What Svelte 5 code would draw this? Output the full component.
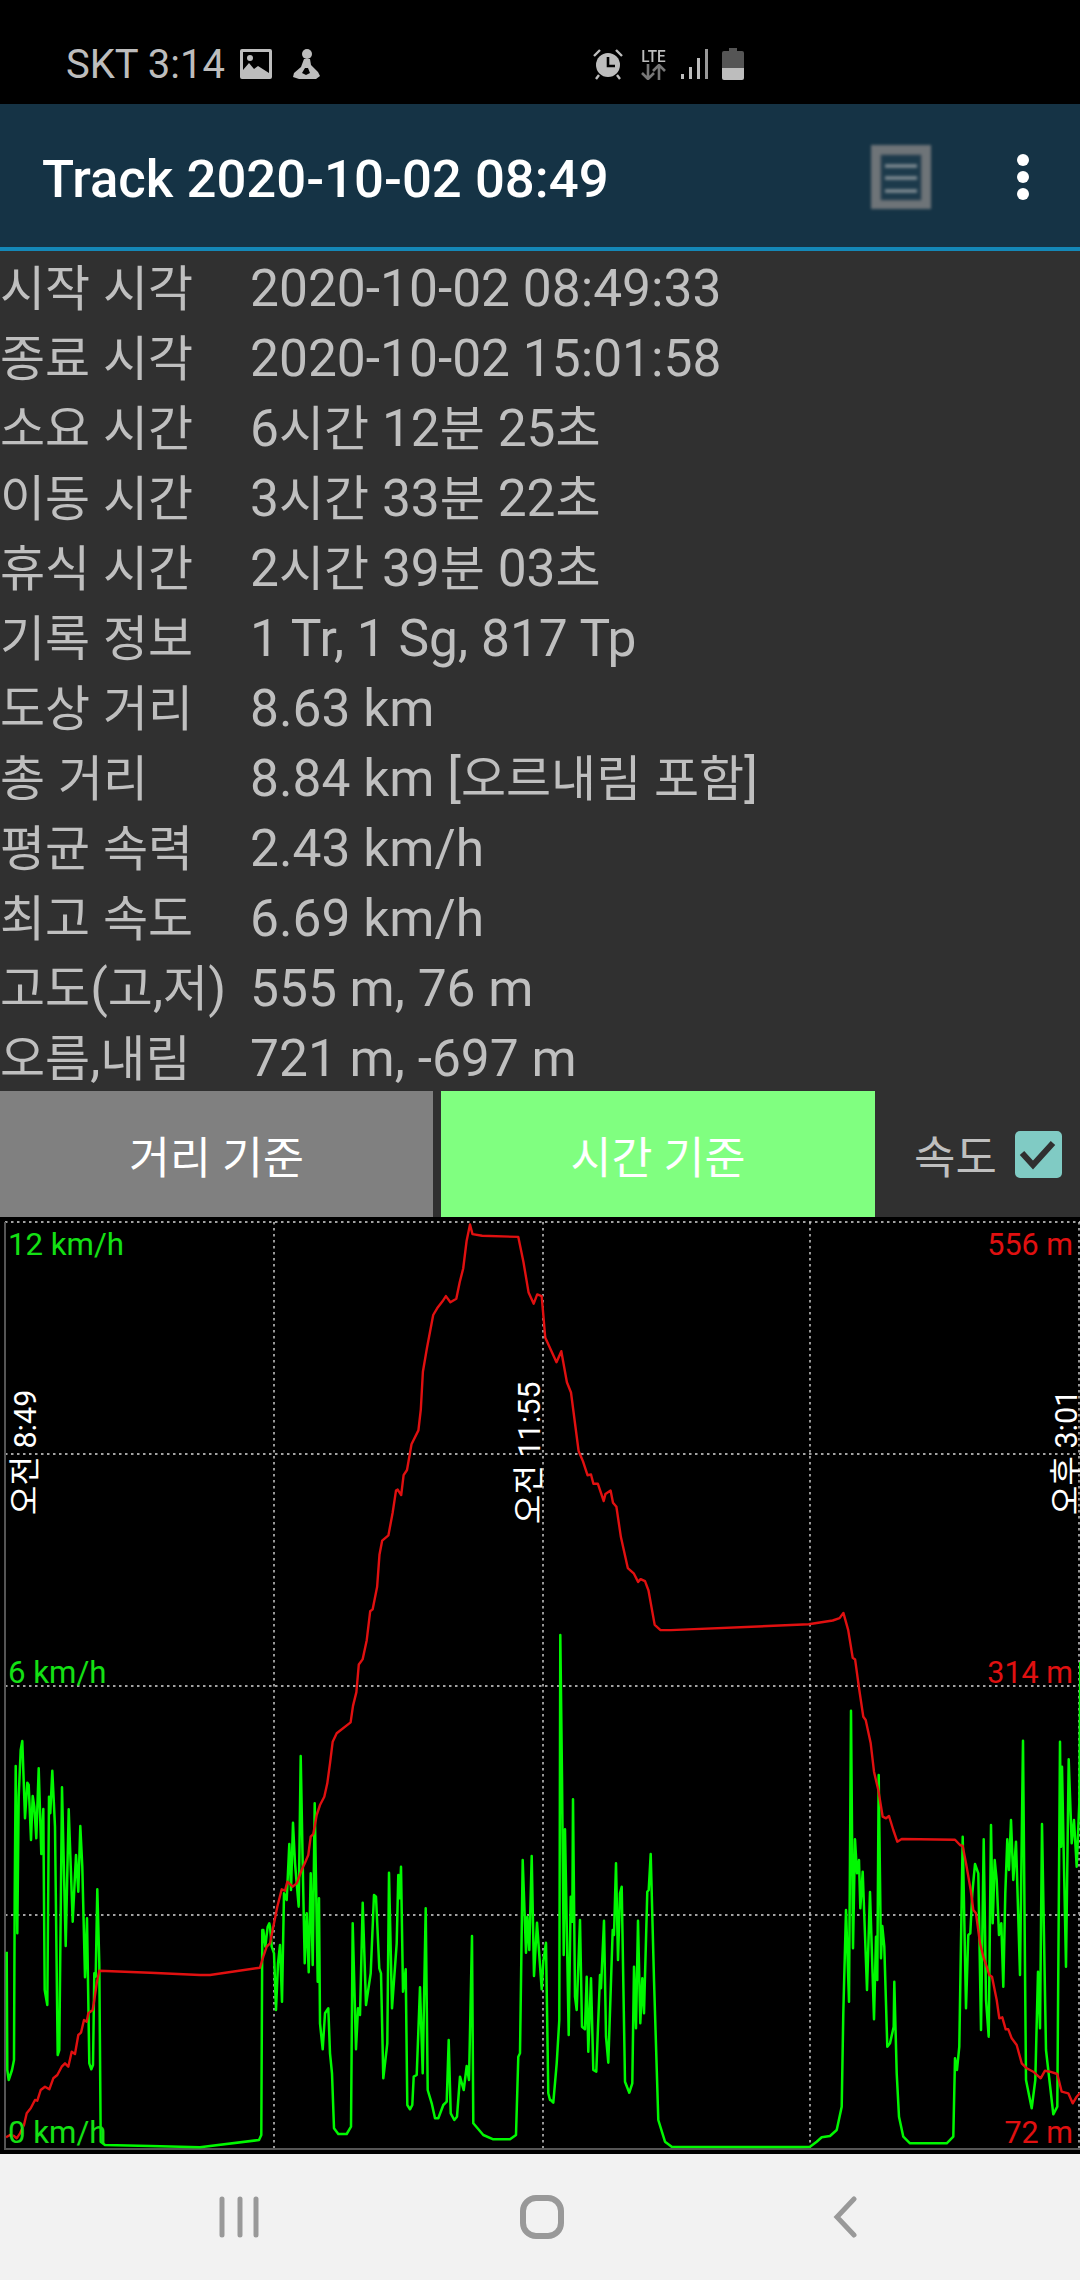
<script>
  const rows = [
    ['시작 시각', '2020-10-02 08:49:33'],
    ['종료 시각', '2020-10-02 15:01:58'],
    ['소요 시간', '6시간 12분 25초'],
    ['이동 시간', '3시간 33분 22초'],
    ['휴식 시간', '2시간 39분 03초'],
    ['기록 정보', '1 Tr, 1 Sg, 817 Tp'],
    ['도상 거리', '8.63 km'],
    ['총 거리', '8.84 km [오르내림 포함]'],
    ['평균 속력', '2.43 km/h'],
    ['최고 속도', '6.69 km/h'],
    ['고도(고,저)', '555 m, 76 m'],
    ['오름,내림', '721 m, -697 m']
  ];
  const split = (t) => t.split(/([\uAC00-\uD7A3]+)/).filter(Boolean).map((s) => ({ s, ko: /[\uAC00-\uD7A3]/.test(s) }));

  const map = (ox, oy, sc, pts) =>
    pts.trim().split(/\s+/).map((p) => {
      const [x, y] = p.split(',').map(Number);
      return `${(ox + x / sc).toFixed(1)},${(oy + y / sc).toFixed(1)}`;
    }).join(' ');

  const green = [
    map(0, 1730, 3, '20,665 22,1020 26,1050 36,1020 42,990 44,500 47,108 50,400 52,610 56,200 62,60 67,33 70,120 75,265 82,158 86,165 93,330 98,198 103,230 109,325 116,115 124,372 130,237 134,780 142,825 147,200 151,250 157,122 165,290 173,975 178,960 186,172 197,648 206,238 218,575 228,375 235,485 241,288 247,410 255,742 261,565 268,1000 274,1018 279,1005 283,730 287,740 292,478 298,700 302,1235 315,1245 450,1248 600,1252 777,1230 784,1215 787,600 790,600 796,650 803,590 808,580'),
    map(270, 1730, 3, '0,590 5,650 12,670 18,840 24,700 30,645 36,815 42,490 50,510 58,342 63,480 69,278 75,400 86,530 92,78 98,400 104,700 110,550 116,727 122,430 128,705 134,220 143,755 147,505 150,880 158,958 165,850 175,835 180,970 186,1030 192,1195 205,1212 230,1212 243,1190 248,580 258,958 264,835 270,855 278,518 288,825 302,730 312,495 318,500 328,715 333,730 340,1045 352,940 357,428 366,835 380,640 385,435 389,505 393,410 399,785 407,718 412,1125 420,1138 427,1125 431,1040 440,1035 450,772 458,1030 467,535 473,1080 485,1120 495,1165 505,1165 520,1125 530,1115 536,930 542,1150 553,1170 561,1160 570,1040 581,1080 590,1008 597,1050 606,618 610,1180 640,1215 670,1228 720,1228 738,1215 745,980 750,970 758,390 768,668 772,560 778,660 785,378 792,738 801,578 815,778 820,695 828,638 835,1090 840,1110'),
    map(530, 1630, 3, '60,1408 70,1418 80,1300 88,1170 91,15 96,440 101,975 105,598 116,1215 122,800 127,875 129,508 135,1100 140,1140 150,870 156,1190 165,1198 170,1040 175,1265 183,1045 190,1320 199,1325 210,1035 213,1075 222,872 228,1220 235,1298 248,900 252,915 258,700 264,990 270,790 275,770 285,1355 298,1388 307,1360 312,1010 318,1195 324,872 331,1180 337,1045 342,1150 352,785 356,780 362,672 372,1050 385,1470 405,1535 425,1550 810,1551'),
    map(800, 1680, 3, '30,1400 50,1385 65,1372 90,1368 110,1350 125,1280 130,1000 138,690 147,965 153,92 159,805 165,478 171,580 177,540 181,685 188,575 201,930 210,636 222,1018 228,770 232,900 236,285 243,835 247,738 253,800 262,1100 270,1090 281,1040 283,905 290,1180 297,1310 310,1370 330,1390 440,1390 460,1370 465,1135 471,1170 478,1100 488,470 498,985 505,765 511,760 517,640 525,552 535,580 543,1050 551,478 558,960 566,1070 573,435 578,730 584,540 590,600 597,765 604,730 610,920 616,640 622,478 627,570 633,420 640,600 648,485 660,885 669,182 678,1200 695,1285 706,1200 714,875 720,1045 726,432 738,1110 760,1303 772,1280 780,185 783,500 786,260 798,860 806,238 815,490 822,420 830,560 838,370 841,-54')
  ].join(' ');

  const red = [
    map(0, 1730, 3, '18,1222 30,1215 42,1218 50,1225 60,1210 72,1185 80,1150 92,1135 105,1110 112,1112 122,1080 135,1070 148,1078 160,1045 172,1035 185,1010 195,1000 205,1010 215,965 225,972 235,915 243,908 252,870 260,875 265,850 278,840 283,810 290,760 298,722 450,728 600,735 630,735 780,713 790,680 800,650'),
    map(270, 1730, 3, '0,640 10,590 22,530 35,478 45,482 52,455 68,470 80,460 95,420 105,398 115,375 122,320 130,312 140,255 150,225 163,200 172,160 180,100 188,35 200,10'),
    map(0, 1210, 2.904, '1018,1488 1025,1440 1035,1400 1042,1320 1053,1305 1065,1250 1075,1165 1082,1160 1095,1095 1102,1000 1110,960 1128,945 1140,880 1150,815 1155,812 1165,828 1172,770 1182,755 1195,680 1215,640 1222,580 1228,470 1240,400 1258,305 1270,285 1285,265 1295,250 1308,268 1325,258 1335,210 1345,170 1355,90 1365,42 1372,70 1400,75 1505,78 1520,150 1535,240 1550,272 1560,245'),
    map(540, 1210, 2.904, '5,250 15,370 48,442 62,410 78,500 90,530 112,700 125,730 138,770 148,768 155,795 168,795 185,845 190,825 205,815 212,850 222,862 235,950 255,1040 272,1055 285,1080 292,1072 305,1078 315,1105 333,1205 350,1220 380,1220 780,1203 850,1192 870,1185 881,1170 895,1220 908,1300 915,1305'),
    map(800, 1680, 3, '178,30 190,110 197,120 212,190 222,275 235,330 248,410 258,415 267,408 280,450 292,485 305,477 465,479 480,495 488,498 498,550 512,630 520,690 528,700 540,790 550,830 560,860 568,885 576,890 590,960 598,1015 607,1012 617,1048 625,1048 635,1075 650,1095 665,1150 680,1165 700,1175 722,1195 735,1172 750,1175 772,1182 785,1235 805,1240 818,1270 830,1250 841,1238')
  ].join(' ');

  const hGrid = [1222, 1454, 1686, 1915];
  const vGrid = [274, 543, 810, 1079];
  const left = [['12 km/h', 1255], ['6 km/h', 1683], ['0 km/h', 2143]];
  const right = [['556 m', 1255], ['314 m', 1683], ['72 m', 2143]];
  const vert = [['오전', '8:49', 36, 1515], ['오전', '11:55', 540, 1524], ['오후', '3:01', 1077, 1515]];
</script>

<div class="page">
  <div class="status">
    <span class="carrier">SKT 3:14</span>
    <svg class="ic-image" viewBox="0 0 32 30" width="32" height="30">
      <path fill="#bdbdbd" fill-rule="evenodd" d="M2 0h28a2 2 0 0 1 2 2v26a2 2 0 0 1-2 2H2a2 2 0 0 1-2-2V2a2 2 0 0 1 2-2zM3 3v18l6-7 5 6 4-3 11 7V3z"/>
      <circle cx="10" cy="9" r="3" fill="#bdbdbd"/>
    </svg>
    <svg class="ic-fig" viewBox="0 0 28 30" width="28" height="30">
      <circle cx="15" cy="5" r="5" fill="#bdbdbd"/>
      <path fill="#bdbdbd" fill-rule="evenodd" d="M12 10h6l1 6 7 7 2 4-4 3H7l-6-2 1-4 7-6zM13 19l-3 5 4 2 4-2-2-5z"/>
    </svg>
    <svg class="ic-alarm" viewBox="0 0 32 32" width="32" height="32">
      <path stroke="#bdbdbd" stroke-width="2.4" fill="none" d="M2 8 8 2M30 8 24 2M7 27 4 31M25 27l3 4"/>
      <circle cx="16" cy="17" r="12" fill="#bdbdbd"/>
      <path stroke="#000" stroke-width="2.6" fill="none" d="M16 9v9h7"/>
    </svg>
    <span class="net">
      <span class="lte">LTE</span>
      <svg viewBox="0 0 32 16" width="32" height="16">
        <path stroke="#777" stroke-width="2.6" fill="none" d="M10 0v14M4 9l6 6 6-6M21 16V2M15 7l6-6 6 6"/>
      </svg>
    </span>
    <svg class="ic-signal" viewBox="0 0 27 30" width="27" height="30">
      <path fill="#bdbdbd" d="M0 25h3v5H0zM8 18h3v12H8zM16 9h3v21h-3z"/>
      <path fill="#999" d="M24 0h3v30h-3z"/>
    </svg>
    <svg class="ic-batt" viewBox="0 0 22 32" width="22" height="32">
      <path fill="#555" d="M7 0h8v3h5a2 2 0 0 1 2 2v15H0V5a2 2 0 0 1 2-2h5z"/>
      <path fill="#bdbdbd" d="M0 20h22v10a2 2 0 0 1-2 2H2a2 2 0 0 1-2-2z"/>
    </svg>
  </div>

  <header class="bar">
    <h1>Track 2020-10-02 08:49</h1>
    <svg class="ic-list" viewBox="0 0 60 64" width="60" height="64">
      <rect x="0" y="0" width="60" height="64" fill="#6e7478"/>
      <rect x="10" y="10" width="40" height="45" fill="#1c3a4b" stroke="#3c4c58" stroke-width="1"/>
      <path stroke="#7f8b92" stroke-width="3.5" d="M14 21h32M14 33h32M14 46h32"/>
    </svg>
    <svg class="ic-more" viewBox="0 0 14 46" width="14" height="46">
      <circle cx="7" cy="6" r="6" fill="#fff"/>
      <circle cx="7" cy="23" r="6" fill="#fff"/>
      <circle cx="7" cy="40" r="6" fill="#fff"/>
    </svg>
  </header>

  <section class="info">
    {#each rows as [label, value]}
      <div class="row">
        <span class="lab">{#each split(label) as p}{#if p.ko}<span class="ko">{p.s}</span>{:else}{p.s}{/if}{/each}</span>
        <span>{#each split(value) as p}{#if p.ko}<span class="ko">{p.s}</span>{:else}{p.s}{/if}{/each}</span>
      </div>
    {/each}
  </section>

  <div class="tabs">
    <button class="tab off">거리 기준</button>
    <button class="tab on">시간 기준</button>
    <span class="speed">속도</span>
    <span class="check">
      <svg viewBox="0 0 47 47" width="47" height="47">
        <path d="M7 22l11 12L38 12" fill="none" stroke="#303030" stroke-width="6"/>
      </svg>
    </span>
  </div>

  <div class="chart">
    <svg viewBox="0 1217 1080 937" width="1080" height="937">
      <g class="grid">
        {#each hGrid as y}<line x1="5" y1={y} x2="1080" y2={y} />{/each}
        {#each vGrid as x}<line x1={x} y1="1222" x2={x} y2="2149" />{/each}
      </g>
      <path class="axis" d="M5 1222V2149H1080" />
      <polyline class="green" points={green} />
      <polyline class="red" points={red} />
      {#each left as [t, y]}<text class="lg" x="8" y={y}>{t}</text>{/each}
      {#each right as [t, y]}<text class="lr" x="1073" y={y}>{t}</text>{/each}
      {#each vert as [a, b, x, y]}
        <text class="lv" transform="rotate(-90 {x} {y})" x={x} y={y}><tspan class="lvk">{a}</tspan> {b}</text>
      {/each}
    </svg>
  </div>

  <nav class="nav">
    <svg viewBox="0 0 42 42" width="42" height="42">
      <path stroke="#999" stroke-width="5" stroke-linecap="round" d="M3 3v36M21 3v36M37 3v36"/>
    </svg>
    <svg viewBox="0 0 44 44" width="44" height="44">
      <rect x="3" y="3" width="38" height="38" rx="13" fill="none" stroke="#999" stroke-width="6"/>
    </svg>
    <svg class="back" viewBox="0 0 24 42" width="24" height="42">
      <path d="M21 3 4 21l17 18" fill="none" stroke="#999" stroke-width="5" stroke-linecap="round"/>
    </svg>
  </nav>
</div>

<style>
  :global(body) { margin: 0; background: #000; }
  .page {
    width: 1080px;
    height: 2280px;
    overflow: hidden;
    font-family: Roboto, "Noto Sans CJK KR", sans-serif;
    background: #303030;
  }
  .status {
    height: 104px;
    background: #000;
    display: flex;
    align-items: center;
    padding: 24px 0 0 66px;
    box-sizing: border-box;
    color: #bdbdbd;
  }
  .carrier { font-size: 40px; width: 174px; white-space: nowrap; }
  .ic-fig { margin-left: 20px; }
  .ic-alarm { margin-left: 272px; }
  .net { display: flex; flex-direction: column; align-items: center; margin-left: 14px; width: 32px; }
  .lte { font-size: 17px; font-weight: 500; line-height: 15px; transform: scaleX(0.9); }
  .ic-signal { margin-left: 11px; }
  .ic-batt { margin-left: 14px; }

  .bar {
    height: 143px;
    background: #153345;
    border-bottom: 4px solid #1488b8;
    display: flex;
    align-items: center;
    padding-left: 42px;
  }
  h1 {
    margin: 6px 0 0;
    color: #fff;
    font-size: 52.7px;
    font-weight: 500;
    width: 829px;
    white-space: nowrap;
  }
  .ic-list { filter: blur(1.8px); margin-top: 3px; }
  .ic-more { margin: 3px 0 0 85px; }

  .info {
    height: 840px;
    box-sizing: border-box;
    padding-top: 3px;
    overflow: hidden;
    color: #bfbfbf;
    font-size: 51.5px;
  }
  .row {
    height: 70px;
    line-height: 70px;
    display: grid;
    grid-template-columns: 250px 1fr;
    white-space: nowrap;
  }
  .ko { font-size: 49px; }

  .tabs {
    height: 126px;
    display: flex;
    align-items: center;
    background: #303030;
  }
  .tab {
    border: 0;
    padding: 0;
    height: 126px;
    color: #fff;
    font: 44.5px Roboto, "Noto Sans CJK KR", sans-serif;
  }
  .off { width: 433px; background: #808080; }
  .on { width: 434px; margin-left: 8px; background: #80ff80; }
  .speed { flex: none; margin-left: 39px; font-size: 45px; color: #bfbfbf; width: 84px; white-space: nowrap; }
  .check {
    flex: none;
    margin-left: 17px;
    width: 47px;
    height: 47px;
    background: #80cbc4;
    border-radius: 5px;
    display: block;
  }
  .check svg { display: block; }

  .chart { height: 937px; background: #000; }
  .chart svg { display: block; }
  .grid line { stroke: #d8d8d8; stroke-width: 1.4; stroke-dasharray: 2.5 3.5; }
  .axis { fill: none; stroke: #555; stroke-width: 2; }
  .green { fill: none; stroke: #00f800; stroke-width: 2.5; stroke-linejoin: round; }
  .red { fill: none; stroke: #e01010; stroke-width: 2.4; stroke-linejoin: round; }
  .lg { fill: #14e014; font-size: 31.2px; font-family: Roboto, sans-serif; }
  .lr { fill: #e01010; font-size: 30.5px; font-family: Roboto, sans-serif; text-anchor: end; }
  .lv { fill: #fff; font-size: 30.5px; font-family: Roboto, "Noto Sans CJK KR", sans-serif; }
  .lvk { font-size: 32px; }

  .nav {
    height: 126px;
    background: #f2f2f2;
    display: flex;
    align-items: center;
    padding-left: 219px;
    gap: 259px;
    box-sizing: border-box;
  }
  .nav svg { flex: none; }
  .nav .back { margin-left: 10px; }
</style>
